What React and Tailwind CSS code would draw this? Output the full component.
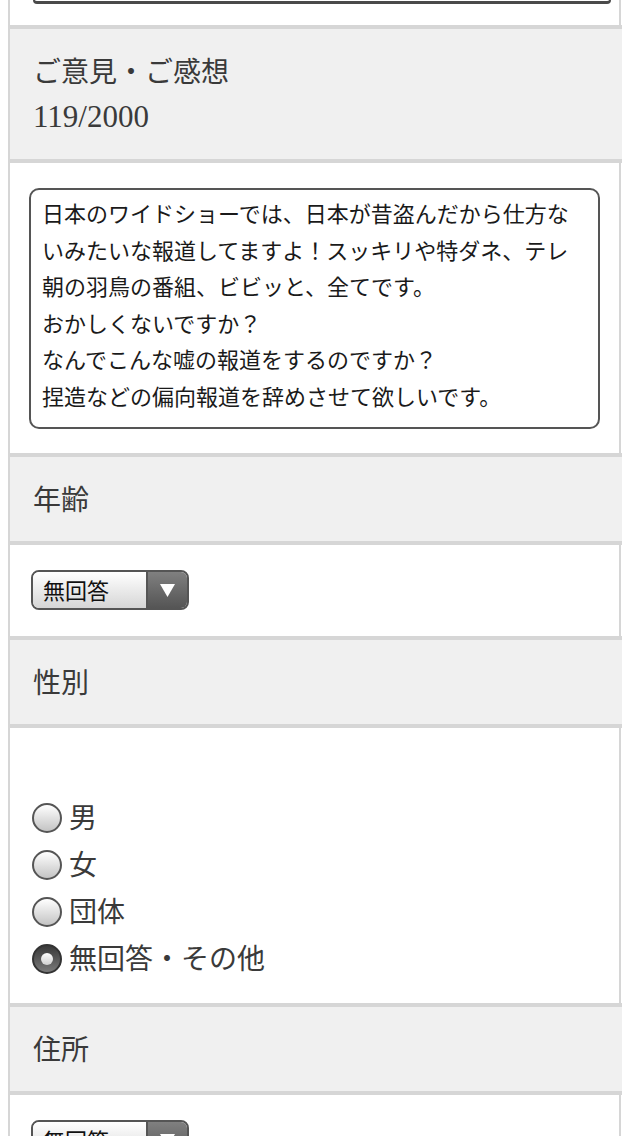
import React from "react";

const serif = "font-['Liberation_Serif','Noto_Sans_CJK_JP',serif]";
const sans = "font-['Liberation_Sans','Noto_Sans_CJK_JP',sans-serif]";

function Header({ children, pb = "pb-[18px]" }) {
  return (
    <div
      className={`border-y-4 border-l-2 border-[#d6d6d6] bg-[#f0f0f0] pl-[23px] pt-[22px] ${pb} text-[28px] leading-[44px] text-[#3a3a3a] ${serif}`}
    >
      {children}
    </div>
  );
}

function Cell({ className = "", children }) {
  return (
    <div className={`mr-[1px] border-x-2 border-[#d6d6d6] bg-white ${className}`}>
      {children}
    </div>
  );
}

function Select() {
  return (
    <div className="ml-[21px] flex h-[40px] w-[158px] overflow-hidden rounded-[8px] border-2 border-[#555]">
      <div
        className={`flex flex-1 items-center bg-linear-to-b from-white to-[#d6d6d6] pl-[10px] pt-[2px] text-[22px] text-[#111] ${sans}`}
      >
        無回答
      </div>
      <div className="flex w-[41px] items-center justify-center border-l-2 border-[#555] bg-linear-to-b from-[#808080] to-[#555]">
        <svg width="15" height="13" viewBox="0 0 15 13">
          <polygon points="0,0 15,0 7.5,13" fill="#fff" />
        </svg>
      </div>
    </div>
  );
}

function Radio({ label, checked }) {
  return (
    <div className="flex h-[47px] items-center gap-[7px]">
      {checked ? (
        <div className="flex h-[30px] w-[30px] items-center justify-center rounded-full border-2 border-[#333] bg-linear-to-b from-[#3a3a3a] to-[#7a7a7a]">
          <div className="h-[12px] w-[12px] rounded-full bg-linear-to-b from-white to-[#d0d0d0]" />
        </div>
      ) : (
        <div className="h-[30px] w-[30px] rounded-full border-2 border-[#555] bg-linear-to-b from-white to-[#c4c4c4]" />
      )}
      <span className={`pt-[2px] text-[28px] leading-[47px] text-[#3a3a3a] ${serif}`}>{label}</span>
    </div>
  );
}

export default function App() {
  const lines = [
    "日本のワイドショーでは、日本が昔盗んだから仕方な",
    "いみたいな報道してますよ！スッキリや特ダネ、テレ",
    "朝の羽鳥の番組、ビビッと、全てです。",
    "おかしくないですか？",
    "なんでこんな嘘の報道をするのですか？",
    "捏造などの偏向報道を辞めさせて欲しいです。",
  ];
  return (
    <div className="min-h-[1136px] w-[640px] overflow-hidden bg-white">
      <div className="ml-[8px] w-[614px]">
        <Cell className="h-[25px]">
          <div className="ml-[23px] mr-[8px] h-[4px] rounded-b-[6px] border-x-2 border-b-[3px] border-[#4a4a4a]" />
        </Cell>
        <Header pb="pb-[20px]">
          <div>ご意見・ご感想</div>
          <div className="text-[31px]">119/2000</div>
        </Header>
        <Cell className="pb-[24px] pt-[25px]">
          <div
            className={`mx-[19px] h-[241px] rounded-[10px] border-2 border-[#555] pl-[11px] pt-[7px] text-[22px] leading-[36.6px] text-[#1a1a1a] ${sans}`}
          >
            {lines.map((l, i) => (
              <div key={i} className="whitespace-nowrap">
                {l}
              </div>
            ))}
          </div>
        </Cell>
        <Header>年齢</Header>
        <Cell className="pb-[26px] pt-[25px]">
          <Select />
        </Cell>
        <Header>性別</Header>
        <Cell className="pb-[21px] pl-[22px] pt-[66px]">
          <Radio label="男" />
          <Radio label="女" />
          <Radio label="団体" />
          <Radio label="無回答・その他" checked />
        </Cell>
        <Header>住所</Header>
        <Cell className="pb-[26px] pt-[25px]">
          <Select />
        </Cell>
      </div>
    </div>
  );
}
